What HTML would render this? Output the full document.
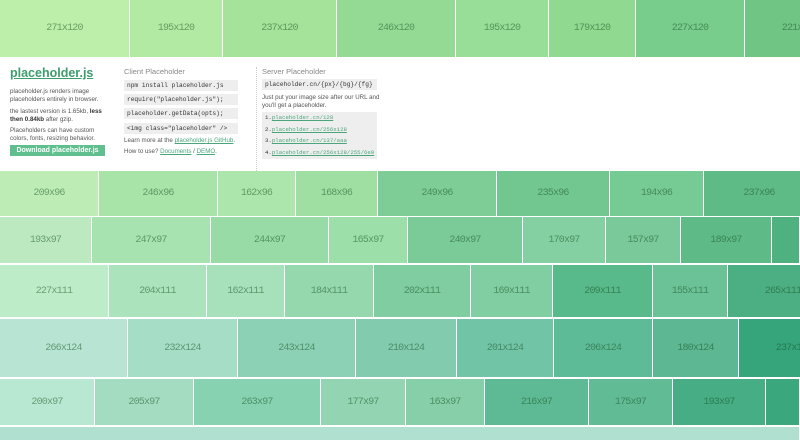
<!DOCTYPE html>
<html><head><meta charset="utf-8"><style>
*{margin:0;padding:0;box-sizing:border-box}
body{width:800px;height:427px;overflow:hidden;background:#fff;font-family:"Liberation Sans",sans-serif;position:relative}
.t{position:absolute;display:flex;align-items:center;justify-content:center;font-family:"Liberation Mono",monospace;font-size:10px;color:rgba(20,80,30,.5);letter-spacing:-.8px;overflow:hidden}
.a{position:absolute;white-space:nowrap}
.p{font-size:6.2px;color:#555;line-height:8px}
.code{position:absolute;background:#eee;font-family:"Liberation Mono",monospace;font-size:6.2px;color:#333;padding-left:3px;line-height:11px;height:11px;overflow:hidden}
.s{font-size:5.7px}
.h{font-size:7.5px;color:#888}
a{color:#4aa67a;text-decoration:underline}
</style></head><body>
<div id="tiles"></div>
<div class="a" style="left:10px;top:66px;font-size:12.5px;font-weight:bold;color:#3d9c6c;text-decoration:underline">placeholder.js</div>
<div class="a p" style="left:10px;top:88px">placeholder.js renders image<br>placeholders entirely in browser.</div>
<div class="a p" style="left:10px;top:108px">the lastest version is 1.65kb, <b style="color:#333">less</b><br><b style="color:#333">then 0.84kb</b> after gzip.</div>
<div class="a p" style="left:10px;top:127px">Placeholders can have custom<br>colors, fonts, resizing behavior.</div>
<div class="a" style="left:10px;top:145px;width:95px;height:11px;background:#5fbf8f;color:#fff;font-weight:bold;font-size:7px;line-height:11px;text-align:center">Download placeholder.js</div>
<div class="a h" style="left:124px;top:67px">Client Placeholder</div>
<div class="code" style="left:124px;top:80px;width:114px">npm install placeholder.js</div>
<div class="code" style="left:124px;top:94px;width:114px">require("placeholder.js");</div>
<div class="code" style="left:124px;top:108px;width:114px">placeholder.getData(opts);</div>
<div class="code" style="left:124px;top:123px;width:114px">&lt;img class="placeholder" /&gt;</div>
<div class="a p" style="left:124px;top:137px">Learn more at the <a>placeholder.js GitHub</a>.</div>
<div class="a p" style="left:124px;top:148px">How to use? <a>Documents</a> / <a>DEMO</a>.</div>
<div class="a" style="left:256px;top:67px;height:104px;border-left:1px dotted #ccc"></div>
<div class="a h" style="left:262px;top:67px">Server Placeholder</div>
<div class="code" style="left:262px;top:79px;width:115px">placeholder.cn/{px}/{bg}/{fg}</div>
<div class="a p" style="left:262px;top:94px">Just put your image size after our URL and<br>you'll get a placeholder.</div>
<div class="a" style="left:262px;top:112px;width:115px;height:47px;background:#eee"></div>
<div class="code s" style="left:262px;top:112px;width:115px">1.<a>placeholder.cn/128</a></div>
<div class="code s" style="left:262px;top:124px;width:115px">2.<a>placeholder.cn/256x128</a></div>
<div class="code s" style="left:262px;top:135px;width:115px">3.<a>placeholder.cn/137/aaa</a></div>
<div class="code s" style="left:262px;top:147px;width:115px">4.<a>placeholder.cn/256x128/255/6e9</a></div>
<script>
var rows=[
[0,57,[130,223,337,456,549,636,745,800],["#bdeeaa","#b3eaa3","#a5e39a","#94da94","#98de98","#90d990","#78cc8c","#70c585"],["271x120","195x120","237x120","246x120","195x120","179x120","227x120","221x120"]],
[171,216,[99,218,296,378,497,610,704,800],["#bdedb5","#a8e4a8","#ace6ac","#9fdfa2","#7ecd96","#72c790","#76ca94","#5fbb86"],["209x96","246x96","162x96","168x96","249x96","235x96","194x96","237x96"]],
[217,263,[92,211,329,408,523,606,681,772,800],["#bce9c0","#a7e2b1","#98dba7","#9ddfa8","#7bcb98","#85d0a2","#7ac99a","#5ebb88","#4fb080"],["193x97","247x97","244x97","165x97","240x97","170x97","157x97","189x97",""]],
[265,317,[109,207,285,374,471,553,653,728,800],["#bdedc8","#abe3bd","#a6e1bb","#95d8ae","#7fcda0","#81cea2","#58b98a","#6cc297","#4caf83"],["227x111","204x111","162x111","184x111","202x111","169x111","209x111","155x111","265x111"]],
[319,377,[128,238,356,457,554,653,739,800],["#b8e5d3","#a5ddc6","#8cd1b5","#82cbaf","#72c4a7","#5ebb97","#5cb792","#36a57c"],["266x124","232x124","243x124","210x124","201x124","206x124","180x124","237x124"]],
[379,425,[95,194,321,406,485,589,673,766,800],["#b8e8d1","#a3dcc0","#87d2b1","#93d5b2","#86cfa8","#5dba94","#61bc96","#46ad84","#3aa77c"],["200x97","205x97","263x97","177x97","163x97","216x97","175x97","193x97",""]],
[427,440,[800],["#b0e0d0"],[""]]
];
var h="";
rows.forEach(function(r){var x=0;r[2].forEach(function(e,i){var w=(r[1]-r[0]);var lab=r[4][i];var tw=e-x-1;var full=(e==800&&lab)?Math.max(tw,110):tw;
h+='<div class="t" style="left:'+x+'px;top:'+r[0]+'px;width:'+full+'px;height:'+w+'px;background:'+r[3][i]+'">'+lab+'</div>';x=e;});});
document.getElementById("tiles").innerHTML=h;
</script>
</body></html>
